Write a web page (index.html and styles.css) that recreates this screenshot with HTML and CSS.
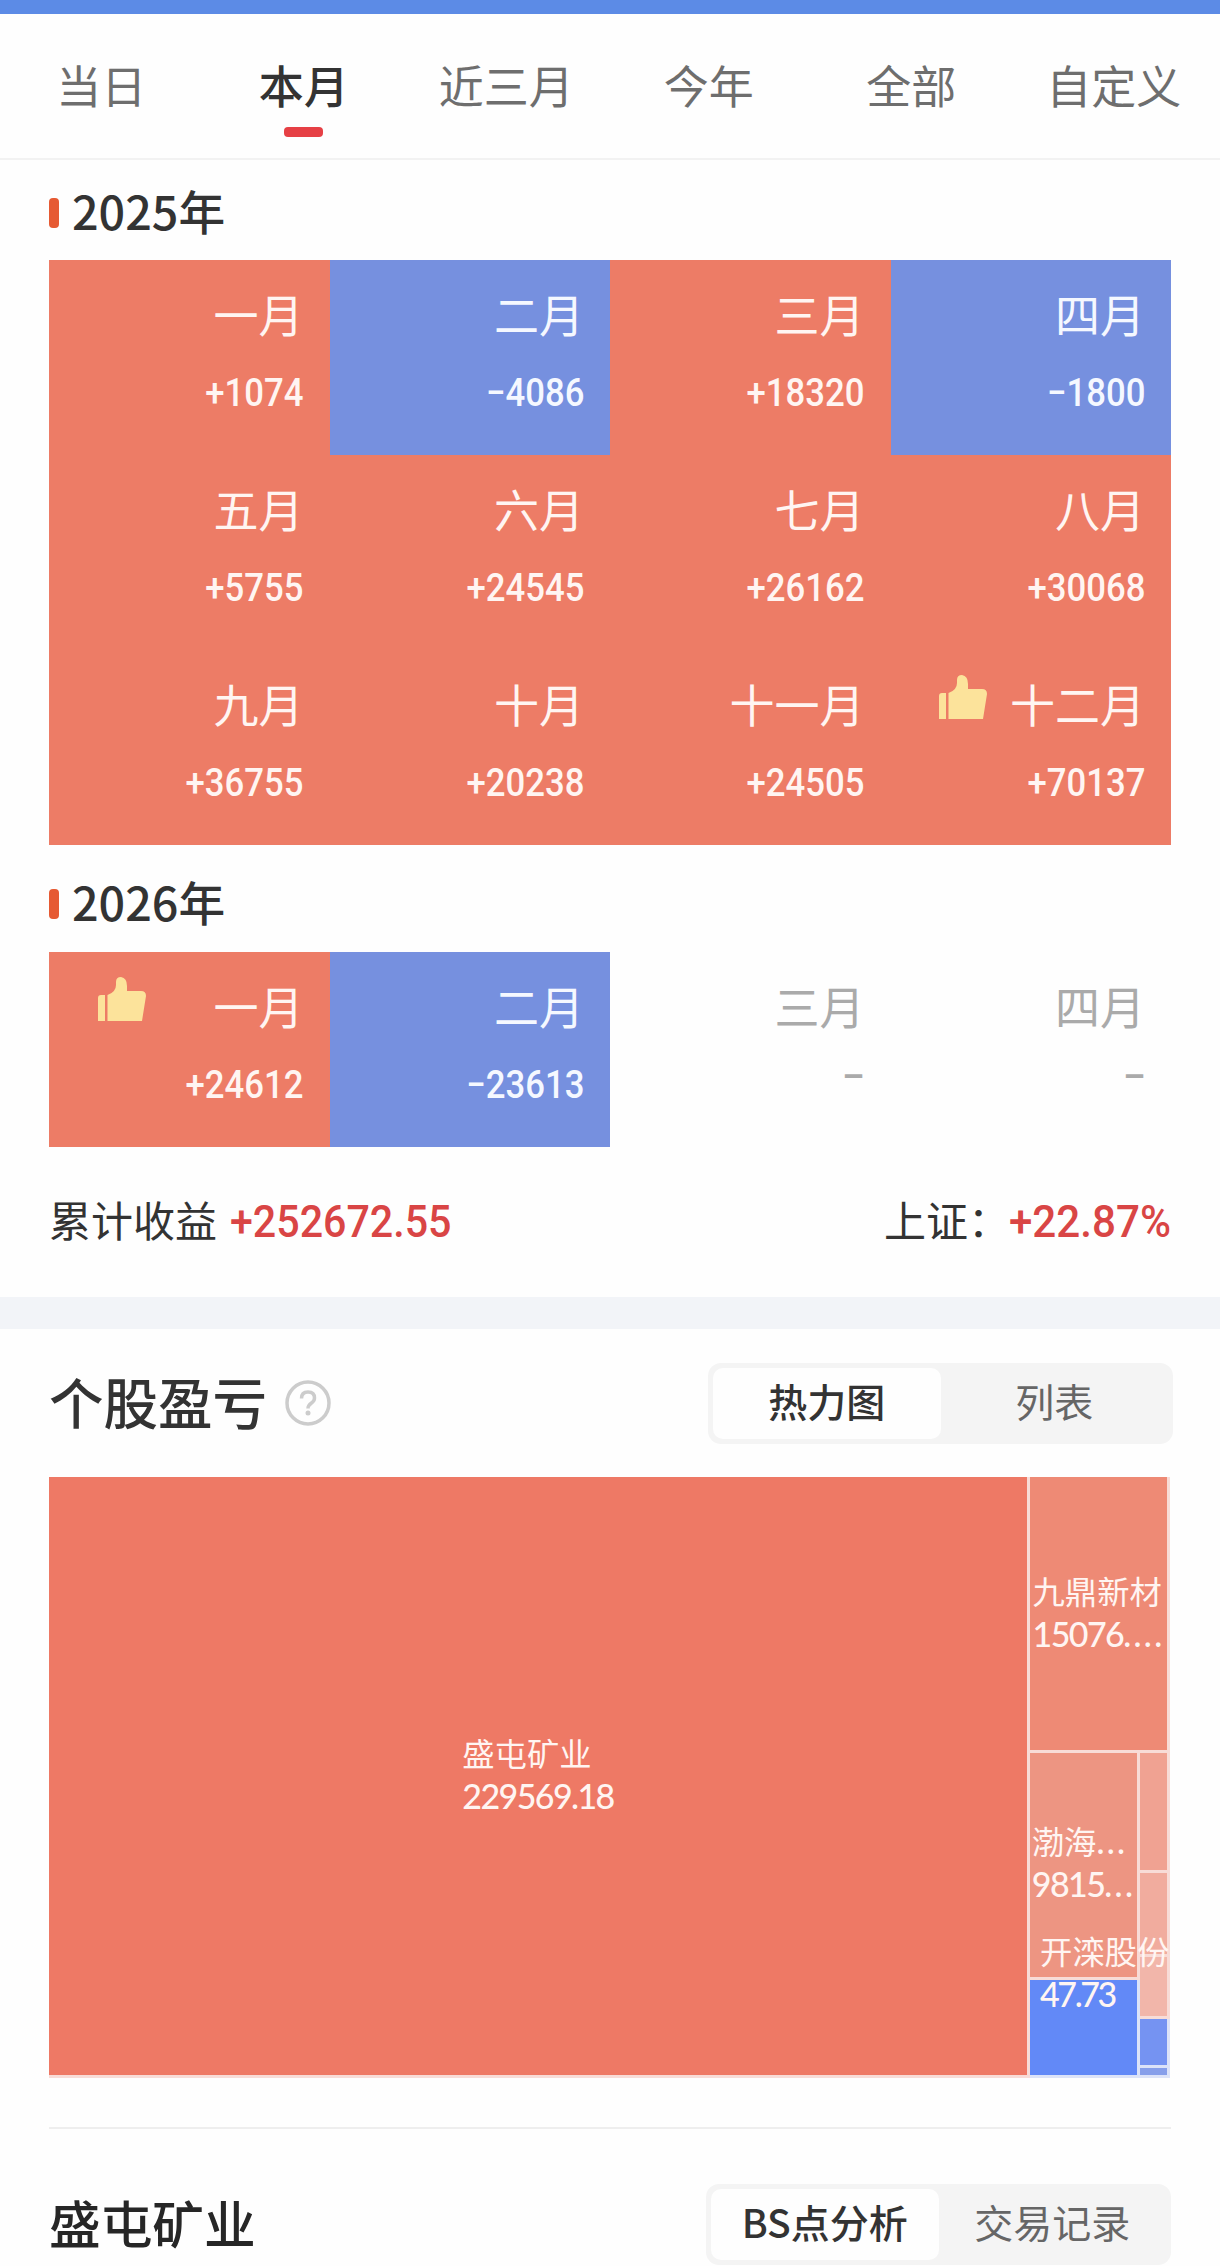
FILE: index.html
```html
<!DOCTYPE html>
<html lang="zh-CN">
<head>
    <meta charset="UTF-8">
    <title>收益日历</title>
    <link rel="stylesheet" href="styles.css">
</head>
<body>
    <svg width="0" height="0" class="defs">
        <symbol id="thumb" viewBox="0 0 48 44">
            <path d="M3 18H7V44H0V21Q0 18 3 18ZM9.500 44V18Q18 15 18 8V5Q18 0 23 0Q29 1 29 9V14H43Q48 14 48 19L44 44Z"/>
        </symbol>
    </svg>

    <div class="top-bar"></div>

    <div class="tabs">
        <div class="tab">当日</div>
        <div class="tab active">本月</div>
        <div class="tab">近三月</div>
        <div class="tab">今年</div>
        <div class="tab">全部</div>
        <div class="tab">自定义</div>
    </div>

    <div class="calendar">
        <h2 class="year">2025年</h2>
        <div class="months">
            <div class="month up"><p>一月</p><span>+1074</span></div>
            <div class="month down"><p>二月</p><span>−4086</span></div>
            <div class="month up"><p>三月</p><span>+18320</span></div>
            <div class="month down"><p>四月</p><span>−1800</span></div>
            <div class="month up"><p>五月</p><span>+5755</span></div>
            <div class="month up"><p>六月</p><span>+24545</span></div>
            <div class="month up"><p>七月</p><span>+26162</span></div>
            <div class="month up"><p>八月</p><span>+30068</span></div>
            <div class="month up"><p>九月</p><span>+36755</span></div>
            <div class="month up"><p>十月</p><span>+20238</span></div>
            <div class="month up"><p>十一月</p><span>+24505</span></div>
            <div class="month up"><svg class="thumb"><use href="#thumb"/></svg><p>十二月</p><span>+70137</span></div>
        </div>

        <h2 class="year">2026年</h2>
        <div class="months">
            <div class="month up"><svg class="thumb"><use href="#thumb"/></svg><p>一月</p><span>+24612</span></div>
            <div class="month down"><p>二月</p><span>−23613</span></div>
            <div class="month empty"><p>三月</p><span>–</span></div>
            <div class="month empty"><p>四月</p><span>–</span></div>
        </div>

        <div class="total">
            <div>累计收益<b class="profit">+252672.55</b></div>
            <div>上证：<b class="index">+22.87%</b></div>
        </div>
    </div>

    <div class="section">
        <div class="section-head">
            <h1>个股盈亏</h1>
            <svg class="help" viewBox="0 0 48 48">
                <circle cx="24" cy="24" r="21"/>
                <path d="M17.500 19.500Q17.500 13 24 13Q30.500 13 30.500 19Q30.500 22 27.500 24Q24 26.500 24 29.500"/>
                <circle class="dot" cx="24" cy="34" r="2.500"/>
            </svg>
            <div class="switch">
                <div class="option selected">热力图</div>
                <div class="option">列表</div>
            </div>
        </div>

        <div class="heatmap">
            <div class="tile main"><div class="label">盛屯矿业<br><span>229569.18</span></div></div>
            <div class="side">
                <div class="tile second"><div class="label">九鼎新材<br><span>15076<i>....</i></span></div></div>
                <div class="side-bottom">
                    <div class="column">
                        <div class="tile third"><div class="label">渤海<span><i>...</i></span><br><span>9815<i>...</i></span></div></div>
                        <div class="tile loss"></div>
                    </div>
                    <div class="column">
                        <div class="tile s1"></div>
                        <div class="tile s2"></div>
                        <div class="tile s3"></div>
                        <div class="tile s4"></div>
                        <div class="tile s5"></div>
                    </div>
                    <div class="label over">开滦股份<br><span>47.73</span></div>
                </div>
            </div>
        </div>

        <div class="stock-head">
            <h3>盛屯矿业</h3>
            <div class="switch">
                <div class="option selected">BS点分析</div>
                <div class="option">交易记录</div>
            </div>
        </div>
    </div>
</body>
</html>
```
FILE: styles.css
```css
* {
    box-sizing: border-box;
}
body {
    margin: 0;
    width: 1220px;
    height: 2266px;
    overflow: hidden;
    background-color: #fefefe;
    color: #333;
    font-family: "Noto Sans CJK SC", sans-serif;
}
h1, h2, h3, p {
    margin: 0;
    font-weight: 500;
}
.defs {
    position: absolute;
}
.top-bar {
    height: 14px;
    background-color: #5c8be6;
}
.tabs {
    display: flex;
    height: 146px;
    padding-right: 5px;
    border-bottom: 2px solid #f2f2f2;
}
.tab {
    flex: 1;
    text-align: center;
    font-size: 45px;
    line-height: 142px;
    color: #6e6e6e;
    white-space: nowrap;
}
.tab.active {
    font-weight: 500;
    color: #333;
}
.tab.active::after {
    content: "";
    display: block;
    width: 39px;
    height: 10px;
    margin: -29px auto 0;
    border-radius: 4px;
    background-color: #e64045;
}
.calendar {
    height: 1137px;
    padding: 0 49px;
}
.year {
    display: flex;
    align-items: center;
    gap: 13px;
    height: 100px;
    font-size: 46.7px;
    line-height: 60px;
}
.months + .year {
    height: 107px;
    padding-top: 5px;
}
.year::before {
    content: "";
    width: 10px;
    height: 30px;
    margin-top: 6px;
    border-radius: 4px;
    background-color: #e65a33;
}
.months {
    display: grid;
    grid-template-columns: repeat(4, 280.5px);
    grid-auto-rows: 195px;
}
.month {
    position: relative;
    padding: 24px 26px 0 0;
    text-align: right;
    color: #fff5f2;
}
.month p {
    font-size: 45px;
    line-height: 60px;
    font-weight: 400;
}
.month span {
    display: block;
    margin-top: 19px;
    font-family: Roboto, sans-serif;
    font-size: 39px;
    line-height: 60px;
    font-weight: 500;
    transform: scaleX(0.89);
    transform-origin: right;
}
.up {
    background-color: #ed7c66;
}
.down {
    background-color: #7690df;
    color: #f5f8ff;
}
.empty {
    color: #aaa;
}
.empty span {
    margin-top: 11px;
}
.thumb {
    position: absolute;
    top: 25px;
    left: 48.5px;
    width: 48px;
    height: 44px;
    fill: #fce39b;
}
.total {
    display: flex;
    justify-content: space-between;
    align-items: center;
    height: 142px;
    font-size: 42px;
}
.total b {
    display: inline-block;
    font-family: Roboto, sans-serif;
    font-size: 45px;
    font-weight: 500;
    color: #d94545;
}
.profit {
    margin-left: 13px;
    transform: scaleX(0.915);
    transform-origin: left;
}
.total .index {
    margin-left: -12px;
    transform: scaleX(0.937);
    transform-origin: right;
}
.section {
    border-top: 32px solid #f2f4f8;
    padding: 0 49px;
}
.section-head {
    display: flex;
    align-items: center;
    width: 1124px;
    height: 148px;
}
h1 {
    margin-top: -4px;
    font-size: 54.5px;
    line-height: 70px;
}
.help {
    width: 48px;
    height: 48px;
    margin-left: 17px;
    fill: none;
    stroke: #ccc;
    stroke-width: 3.5;
}
.help .dot {
    fill: #ccc;
    stroke: none;
}
.switch {
    display: flex;
    width: 465px;
    height: 81px;
    margin-left: auto;
    padding: 5px;
    border-radius: 13px;
    background-color: #f4f4f4;
}
.option {
    width: 228px;
    border-radius: 10px;
    text-align: center;
    font-size: 39px;
    line-height: 65px;
    color: #666;
}
.option.selected {
    background-color: #fefefe;
    color: #333;
    font-weight: 500;
}
.heatmap {
    display: flex;
    width: 1121px;
    height: 601px;
}
.tile {
    display: flex;
    align-items: center;
    justify-content: center;
    border-right: 3px solid #f8dcd7;
    border-bottom: 3px solid #f8dcd7;
}
.label {
    margin-top: -4px;
    font-size: 32.3px;
    line-height: 43px;
    color: #fff5f2;
    white-space: nowrap;
}
.label span {
    font-family: Lato, sans-serif;
    font-size: 34px;
    font-weight: 500;
    letter-spacing: -1.6px;
}
.label i {
    font-style: normal;
    letter-spacing: 2.3px;
}
.main {
    width: 981px;
    background-color: #ee7965;
}
.side {
    width: 140px;
}
.second {
    height: 276px;
    background-color: #ee8a75;
}
.side-bottom {
    position: relative;
    display: flex;
    height: 325px;
}
.column:first-child {
    width: 110px;
}
.column:nth-child(2) {
    width: 30px;
}
.third {
    height: 227px;
    background-color: #ed9582;
}
.third .label {
    margin-top: -6px;
}
.loss {
    height: 98px;
    background-color: #6289f7;
    border-color: #dce3f8;
}
.s1 {
    height: 120px;
    background-color: #f0a292;
}
.s2 {
    height: 84px;
    background-color: #f1ac9e;
}
.s3 {
    height: 62px;
    background-color: #f2b6aa;
}
.s4 {
    height: 49px;
    background-color: #7593f2;
    border-color: #dce3f8;
}
.s5 {
    height: 10px;
    background-color: #879fea;
    border-color: #dce3f8;
}
.over {
    position: absolute;
    top: 180px;
    left: 10px;
}
.over span {
    letter-spacing: -2.4px;
}
.stock-head {
    display: flex;
    align-items: center;
    height: 138px;
    margin-top: 49px;
    padding-top: 54px;
    border-top: 2px solid #eee;
}
h3 {
    margin-top: -5px;
    font-size: 51.7px;
    line-height: 70px;
    color: #262626;
}
```
